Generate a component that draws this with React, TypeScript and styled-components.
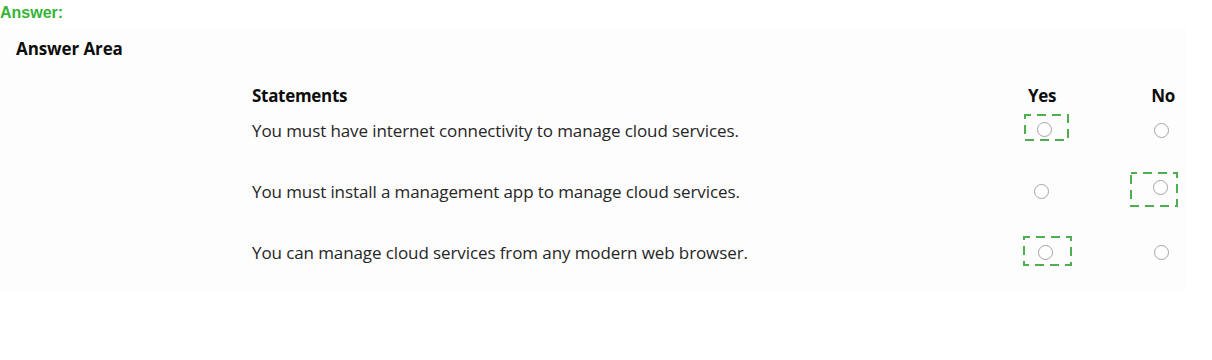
import React from "react";
import styled, { createGlobalStyle } from "styled-components";

const Global = createGlobalStyle`
  html, body { margin: 0; padding: 0; background: #ffffff; }
  * { box-sizing: border-box; }
`;

const Page = styled.div`
  width: 1212px;
  height: 360px;
  background: #ffffff;
`;

const AnswerLabel = styled.div`
  margin-top: 3px;
  font-family: "Liberation Sans", Arial, sans-serif;
  font-weight: 700;
  font-size: 16px;
  line-height: 20px;
  color: #35b435;
`;

const Panel = styled.section`
  margin-top: 3px;
  width: 1186px;
  height: 266px;
  background: #fdfdfd;
  padding: 12px 0 0 16px;
  font-family: "Open Sans", "Noto Sans", sans-serif;
  color: #1f1f1f;
`;

const Title = styled.h2`
  margin: 0;
  font-size: 17px;
  line-height: 22px;
  font-weight: 700;
  color: #0d0d0d;
  letter-spacing: -0.1px;
`;

const Table = styled.div`
  margin: 25px 0 0 236px;
  display: flex;
  flex-direction: column;
`;

const Row = styled.div<{ $header?: boolean }>`
  display: grid;
  grid-template-columns: 758px 64px 66px 46px;
  align-items: center;
  height: ${(p) => (p.$header ? "22px" : "40px")};
  margin-bottom: ${(p) => (p.$header ? "4px" : "21px")};
`;

const HeadText = styled.div`
  font-size: 17px;
  line-height: 22px;
  font-weight: 700;
  color: #0d0d0d;
  letter-spacing: -0.3px;
`;

const HeadCenter = styled(HeadText)<{ $col: number }>`
  grid-column: ${(p) => p.$col};
  text-align: center;
`;

const Statement = styled.div`
  font-size: 17px;
  line-height: 22px;
  color: #262626;
  letter-spacing: -0.1px;
`;

const ChoiceCell = styled.div<{ $col: number }>`
  grid-column: ${(p) => p.$col};
  display: flex;
  justify-content: center;
  align-items: center;
`;

const RadioSlot = styled.div<{ $dx: number; $dy: number }>`
  position: relative;
  width: 15px;
  height: 15px;
  transform: translate(${(p) => p.$dx}px, ${(p) => p.$dy}px);
`;

const Radio = styled.span`
  display: block;
  width: 15px;
  height: 15px;
  border-radius: 50%;
  border: 1.6px solid #a4a4a4;
  background: #ffffff;
`;

const Highlight = styled.svg<{ $l: number; $t: number }>`
  position: absolute;
  left: ${(p) => 7.5 + p.$l}px;
  top: ${(p) => 7.5 + p.$t}px;
  overflow: visible;
  pointer-events: none;
`;

type Box = { l: number; r: number; t: number; b: number };
type Choice = { dx: number; dy: number; box?: Box };

const rows: { text: string; yes: Choice; no: Choice }[] = [
  {
    text: "You must have internet connectivity to manage cloud services.",
    yes: { dx: 2, dy: -2, box: { l: -20, r: 25, t: -15, b: 12 } },
    no: { dx: -2, dy: -1 },
  },
  {
    text: "You must install a management app to manage cloud services.",
    yes: { dx: -1, dy: -1 },
    no: { dx: -3, dy: -5, box: { l: -30, r: 18, t: -15, b: 20 } },
  },
  {
    text: "You can manage cloud services from any modern web browser.",
    yes: { dx: 3, dy: -1, box: { l: -22, r: 27, t: -16, b: 14 } },
    no: { dx: -2, dy: -1 },
  },
];

const DashedBox: React.FC<{ box: Box }> = ({ box }) => {
  const w = box.r - box.l;
  const h = box.b - box.t;
  return (
    <Highlight $l={box.l} $t={box.t} width={w} height={h} viewBox={`0 0 ${w} ${h}`}>
      <rect
        x={1}
        y={1}
        width={w - 2}
        height={h - 2}
        fill="none"
        stroke="#4caf50"
        strokeWidth={2}
        strokeDasharray="9 6"
        strokeDashoffset={3}
      />
    </Highlight>
  );
};

const RadioChoice: React.FC<{ c: Choice; col: number }> = ({ c, col }) => (
  <ChoiceCell $col={col}>
    <RadioSlot $dx={c.dx} $dy={c.dy}>
      <Radio />
      {c.box && <DashedBox box={c.box} />}
    </RadioSlot>
  </ChoiceCell>
);

export default function App() {
  return (
    <Page>
      <Global />
      <AnswerLabel>Answer:</AnswerLabel>
      <Panel>
        <Title>Answer Area</Title>
        <Table>
          <Row $header>
            <HeadText>Statements</HeadText>
            <HeadCenter $col={2}>Yes</HeadCenter>
            <HeadCenter $col={4}>No</HeadCenter>
          </Row>
          {rows.map((r) => (
            <Row key={r.text}>
              <Statement>{r.text}</Statement>
              <RadioChoice c={r.yes} col={2} />
              <RadioChoice c={r.no} col={4} />
            </Row>
          ))}
        </Table>
      </Panel>
    </Page>
  );
}
